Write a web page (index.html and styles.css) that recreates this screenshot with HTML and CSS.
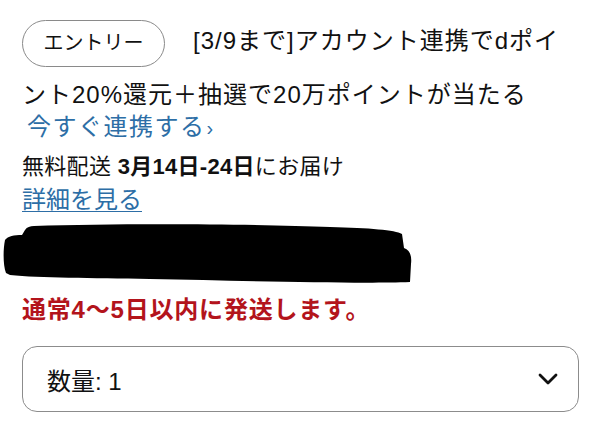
FILE: index.html
```html
<!DOCTYPE html>
<html lang="ja">
<head>
<meta charset="utf-8">
<link rel="stylesheet" href="styles.css">
</head>
<body>
<div class="page">
  <p class="promo"><span class="pill">エントリー</span>[3/9まで]アカウント連携でdポイント20%還元＋抽選で20万ポイントが当たる</p>
  <a class="link-more">今すぐ連携する<span class="caret">›</span></a>
  <p class="delivery">無料配送 <b>3月14日-24日</b>にお届け</p>
  <a class="details">詳細を見る</a>
  <svg class="redact" width="420" height="66" viewBox="0 0 420 66">
    <path d="M34 6 C120 3 260 4 330 7 C370 8 395 10 402 14 L404 28 C410 30 412 36 411 44 L410 62 C360 64 250 61 150 59 C90 58 40 58 10 55 L6 53 C3 45 3 30 5 20 C8 16 14 15 22 15 L25 10 C27 7 30 6 34 6 Z" fill="#000"/>
  </svg>
  <p class="notice">通常4〜5日以内に発送します。</p>
  <div class="select">
    <span class="select-label">数量: 1</span>
    <svg class="chevron" width="20" height="12" viewBox="0 0 20 12"><path d="M2 2 L10 10 L18 2" fill="none" stroke="#111" stroke-width="2.8" stroke-linecap="round" stroke-linejoin="round"/></svg>
  </div>
</div>
</body>
</html>
```
FILE: styles.css
```css
html, body {
  margin: 0;
  padding: 0;
  background: #fff;
}
body {
  font-family: "Liberation Sans", "Noto Sans CJK JP", sans-serif;
  color: #111;
  font-size: 24px;
}
.page {
  width: 556px;
  padding: 6px 0 0 22px;
}
p { margin: 0; }
.promo {
  line-height: 31px;
  letter-spacing: 1px;
}
.pill {
  display: inline-block;
  box-sizing: border-box;
  height: 47px;
  width: 143px;
  margin: 14px 28px 12px 0;
  border: 1.5px solid #8a8a8a;
  border-radius: 24px;
  font-size: 20px;
  line-height: 44px;
  text-align: center;
  vertical-align: middle;
  letter-spacing: 0;
}
.link-more {
  display: block;
  margin-top: 1px;
  margin-left: 5px;
  color: #2d6ea6;
  line-height: 31px;
  font-size: 24px;
  letter-spacing: 1.5px;
}
.caret {
  font-size: 20px;
  margin-left: 1px;
}
.delivery {
  margin-top: 6px;
  line-height: 33px;
  font-size: 22px;
  letter-spacing: 0.3px;
}
.delivery b { font-weight: 700; }
.details {
  display: block;
  color: #2d6ea6;
  text-decoration: underline;
  text-underline-offset: 3px;
  text-decoration-thickness: 1px;
  line-height: 33px;
}
.redact {
  display: block;
  margin: 4px 0 0 -22px;
}
.notice {
  margin-top: 8px;
  color: #b3141c;
  font-weight: 700;
  line-height: 32px;
  letter-spacing: 0.8px;
}
.select {
  box-sizing: border-box;
  width: 557px;
  margin-top: 20px;
  height: 66px;
  border: 1.5px solid #8c8c8c;
  border-radius: 15px;
  display: flex;
  align-items: center;
  justify-content: space-between;
  padding: 0 20px 0 24px;
}
.select-label {
  font-size: 24px;
}
.chevron { display: block; }
```
